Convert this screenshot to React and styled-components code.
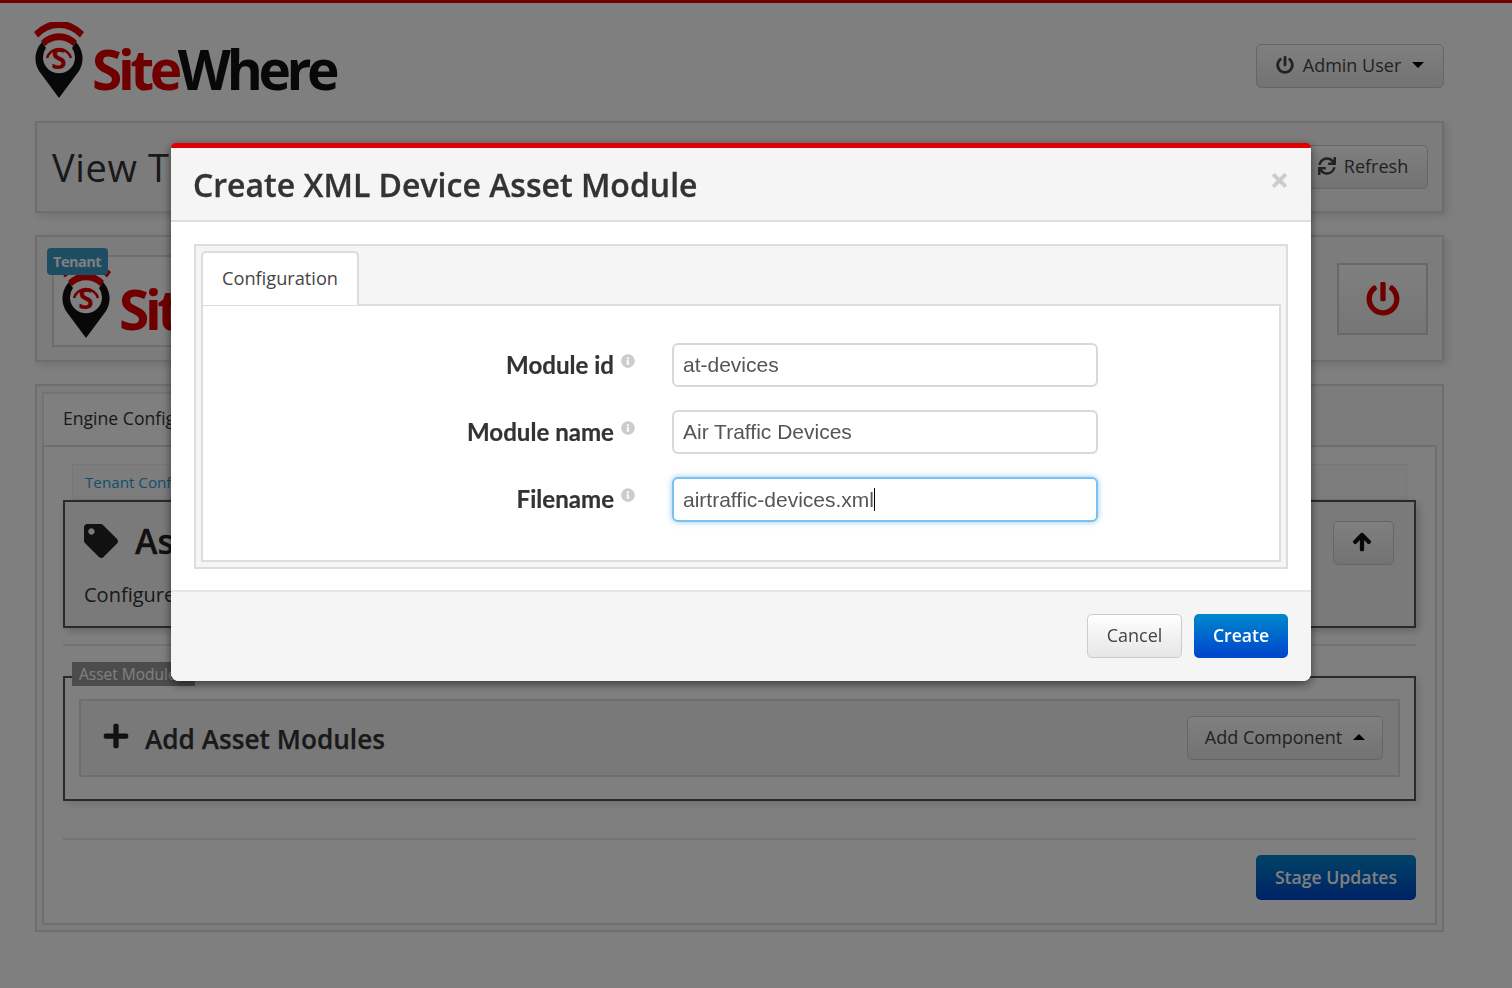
import React from 'react';
import styled, { createGlobalStyle } from 'styled-components';
import { FaPowerOff, FaSync, FaTag, FaPlus, FaArrowUp, FaInfoCircle, FaTimes } from 'react-icons/fa';

const GlobalStyle = createGlobalStyle`
  html, body {
    margin: 0;
    height: 988px;
    overflow: hidden;
    background: #fff;
    font-family: "Open Sans", sans-serif;
    color: #333;
  }
  * { box-sizing: border-box; }
`;

const Page = styled.div`
  border-top: 3px solid #e00000;
  padding: 0 68px 0 35px;
  height: 988px;
`;

const Header = styled.header`
  display: flex;
  justify-content: space-between;
  align-items: flex-start;
  height: 118px;
  padding-top: 19px;
`;

const LogoWrap = styled.div`
  display: flex;
  align-items: flex-start;
  margin-left: ${p => p.$offset || 0}px;
`;

const LogoText = styled.span`
  font-family: "Open Sans", sans-serif;
  font-weight: 700;
  font-size: 55px;
  line-height: 54px;
  letter-spacing: -4.4px;
  margin: 20px 0 0 8px;
  color: #111;
  white-space: nowrap;
  em {
    font-style: normal;
    color: #e00000;
  }
`;

const Button = styled.button`
  display: inline-flex;
  align-items: center;
  justify-content: center;
  gap: ${p => p.$gap || 9}px;
  height: 44px;
  width: ${p => p.$width}px;
  margin-top: ${p => p.$top || 0}px;
  padding: 0 0 2px;
  font-family: "Open Sans", sans-serif;
  font-size: 18px;
  color: #444;
  background: linear-gradient(#fff, #e6e6e6);
  border: 1.5px solid #ccc;
  border-radius: 5px;
  flex: none;
`;

const PrimaryButton = styled(Button)`
  height: ${p => p.$height || 44}px;
  font-size: 17.6px;
  color: #fff;
  font-weight: 600;
  border: none;
  background: linear-gradient(#0088cc, #0044cc);
`;

const Caret = styled.span`
  width: 0;
  height: 0;
  margin-left: 2px;
  border-left: 6px solid transparent;
  border-right: 6px solid transparent;
  border-top: ${p => (p.$up ? 'none' : '6px solid #000')};
  border-bottom: ${p => (p.$up ? '6px solid #000' : 'none')};
`;

const Panel = styled.section`
  position: relative;
  display: flex;
  align-items: center;
  justify-content: space-between;
  height: ${p => p.$height}px;
  margin-bottom: 22px;
  padding: 0 14px 0 15px;
  background: #f8f8f8;
  border: 2px solid #ddd;
  box-shadow: 3px 3px 8px rgba(0, 0, 0, 0.12);
`;

const PageTitle = styled.h1`
  margin: 0;
  font-size: 38px;
  font-weight: 400;
  letter-spacing: 0.6px;
  color: #333;
`;

const TenantBadge = styled.span`
  position: absolute;
  left: 10px;
  top: 11px;
  z-index: 1;
  width: 61px;
  height: 27px;
  padding: 3px 0 0 6px;
  font-size: 14.5px;
  font-weight: 700;
  letter-spacing: -0.5px;
  line-height: 21px;
  color: #fff;
  background: #3a9ac4;
  border-radius: 4px;
`;

const TenantLogoBox = styled.div`
  width: 440px;
  height: 92px;
  margin-top: 5px;
  padding: 5px 0 0 7px;
  background: #fff;
  border: 2px solid #ddd;
  overflow: hidden;
`;

const PowerButton = styled.button`
  display: flex;
  align-items: center;
  justify-content: center;
  width: 91px;
  height: 72px;
  margin-top: 1px;
  padding: 0;
  color: #e00000;
  font-size: 34px;
  background: linear-gradient(#fff, #ececec);
  border: 2px solid #d0d0d0;
`;

const MainPanel = styled.section`
  height: 548px;
  padding: 6px 5px 6px 5px;
  background: #f8f8f8;
  border: 2px solid #ddd;
`;

const MainTab = styled.div`
  width: 300px;
  height: 53px;
  padding: 12px 19px;
  font-size: 17.6px;
  color: #333;
  background: #fff;
  border: 2px solid #e6e6e6;
  border-bottom: none;
`;

const MainContent = styled.div`
  height: 480px;
  padding: 17px 19px 0 19px;
  background: #fff;
  border: 2px solid #ddd;
`;

const SubTab = styled.div`
  height: 36px;
  margin: 0 9px 0 9px;
  padding: 7px 12px;
  font-size: 15.2px;
  color: #1d9ed8;
  background: #fbfbfb;
  border: 1px solid #eee;
`;

const ConfigHeader = styled.div`
  position: relative;
  height: 128px;
  padding: 16px 19px;
  background: #f5f5f5;
  border: 2px solid #555;
  box-shadow: 3px 3px 8px rgba(0, 0, 0, 0.2);
`;

const ConfigTitle = styled.h2`
  display: flex;
  align-items: center;
  gap: 17px;
  margin: 0;
  font-size: 34px;
  font-weight: 600;
  -webkit-text-stroke: 0.3px;
  color: #222;
  svg { font-size: 34px; }
`;

const ConfigText = styled.p`
  margin: 17px 0 0;
  font-size: 20px;
  color: #333;
`;

const UpButton = styled(Button)`
  position: absolute;
  right: 20px;
  top: 19px;
  padding-right: 4px;
  color: #111;
  font-size: 20px;
  svg {
    stroke: currentColor;
    stroke-width: 30;
  }
`;

const Rule = styled.hr`
  margin: ${p => p.$top}px 0 ${p => p.$bottom}px;
  border: none;
  border-top: 2px solid #e6e6e6;
`;

const ModuleGroup = styled.div`
  position: relative;
  height: 125px;
  padding: 21px 14px 0 14px;
  background: #fff;
  border: 2px solid #555;
  box-shadow: 3px 3px 8px rgba(0, 0, 0, 0.12);
`;

const GroupLegend = styled.span`
  position: absolute;
  left: 7px;
  top: -16px;
  width: 123px;
  height: 24px;
  padding: 0 7px;
  font-size: 15.5px;
  line-height: 24px;
  color: #fff;
  background: #999;
`;

const AddBar = styled.div`
  display: flex;
  align-items: center;
  justify-content: space-between;
  height: 78px;
  padding: 0 15px 1px 21px;
  background: #f2f2f2;
  border: 2px solid #ddd;
`;

const AddTitle = styled.h3`
  display: flex;
  align-items: center;
  gap: 15px;
  margin: 3px 0 0;
  font-size: 26.2px;
  font-weight: 600;
  -webkit-text-stroke: 0.25px;
  color: #333;
  svg { font-size: 28px; color: #222; margin-top: -6px; }
`;

const Actions = styled.div`
  display: flex;
  justify-content: flex-end;
`;

const Overlay = styled.div`
  position: fixed;
  inset: 0;
  z-index: 10;
  background: rgba(0, 0, 0, 0.5);
`;

const Modal = styled.div`
  width: 1140px;
  height: 538px;
  margin: 143px 0 0 171px;
  border-top: 5px solid #e00000;
  border-radius: 5px 5px 8px 8px;
  background: #fff;
  box-shadow: 0 3px 10px rgba(0, 0, 0, 0.55);
  overflow: hidden;
`;

const ModalHeader = styled.div`
  display: flex;
  align-items: center;
  justify-content: space-between;
  height: 74px;
  padding: 0 21px 0 22px;
  background: #f5f5f5;
  border-bottom: 2px solid #ddd;
`;

const ModalTitle = styled.h2`
  margin: 0;
  font-size: 32px;
  font-weight: 600;
  -webkit-text-stroke: 0.3px;
  color: #333;
`;

const CloseIcon = styled.span`
  display: flex;
  margin-top: -8px;
  color: #ccc;
  font-size: 21px;
`;

const ModalBody = styled.div`
  height: 368px;
  padding: 22px 23px 0;
`;

const TabBox = styled.div`
  height: 325px;
  padding: 5px;
  background: #f5f5f5;
  border: 2px solid #ddd;
`;

const Tab = styled.div`
  position: relative;
  z-index: 1;
  width: 158px;
  height: 54px;
  padding: 13px 0 0 19px;
  font-size: 18.2px;
  color: #444;
  background: #fff;
  border: 2px solid #ddd;
  border-bottom: none;
  border-radius: 5px 5px 0 0;
`;

const TabContent = styled.div`
  display: flex;
  flex-direction: column;
  gap: 23px;
  height: 258px;
  margin-top: -1px;
  padding-top: 37px;
  background: #fff;
  border: 2px solid #ddd;
`;

const FormRow = styled.div`
  display: flex;
  align-items: center;
`;

const FieldLabel = styled.label`
  display: flex;
  justify-content: flex-end;
  align-items: center;
  gap: 7px;
  width: 469px;
  padding: 0 37px 2px 0;
  font-family: Lato, sans-serif;
  font-weight: 700;
  font-size: 24.1px;
  -webkit-text-stroke: 0.2px;
  color: #333;
  svg {
    font-size: 14px;
    color: #ccc;
    margin-top: -7px;
  }
`;

const FieldInput = styled.div`
  display: flex;
  align-items: center;
  width: 426px;
  height: ${p => (p.$focused ? 45 : 44)}px;
  padding: 0 9px;
  font-family: "Liberation Sans", Arial, sans-serif;
  font-size: 21px;
  color: #555;
  background: #fff;
  border: 2px solid ${p => (p.$focused ? '#7cc0f0' : '#d8d8d8')};
  border-radius: 6px;
  box-shadow: ${p => (p.$focused ? '0 0 6px rgba(102, 175, 233, 0.7)' : 'none')};
`;

const TextCaret = styled.span`
  width: 1px;
  height: 23px;
  background: #000;
`;

const ModalFooter = styled.div`
  display: flex;
  justify-content: flex-end;
  gap: 12px;
  height: 91px;
  padding: 22px 23px 0 0;
  background: #f5f5f5;
  border-top: 2px solid #e6e6e6;
`;

function Logo({ offset }) {
  return (
    <LogoWrap $offset={offset}>
      <svg width="50" height="76" viewBox="0 0 50 76">
        <path d="M0 10 A34 34 0 0 1 50 10 L46 15.5 A28 28 0 0 0 4 15.5 Z" fill="#e00000" />
        <path d="M7 19 A25 25 0 0 1 43 19 L39 24 A20 20 0 0 0 11 24 Z" fill="#e00000" />
        <path
          d="M8 20 A24 24 0 0 0 5 49 L25 76 L45 49 A24 24 0 0 0 42 20 L38 26 A16 16 0 1 1 12 26 Z"
          fill="#111"
        />
        <path d="M13 36 A12.5 12.5 0 0 1 37 36" fill="none" stroke="#e00000" strokeWidth="2.5" />
        <text x="25" y="47" textAnchor="middle" fontFamily="Open Sans, sans-serif" fontWeight="700" fontSize="28" fill="#e00000">
          S
        </text>
      </svg>
      <LogoText>
        <em>Site</em>Where
      </LogoText>
    </LogoWrap>
  );
}

export default function App() {
  return (
    <>
      <GlobalStyle />
      <Page>
        <Header>
          <Logo offset={-1} />
          <Button $width={188} $top={22}>
            <FaPowerOff size={18} />
            Admin User
            <Caret />
          </Button>
        </Header>

        <Panel $height={92}>
          <PageTitle>View Tenant</PageTitle>
          <Button $width={130} $gap={8}>
            <FaSync size={18} />
            Refresh
          </Button>
        </Panel>

        <Panel $height={127}>
          <TenantBadge>Tenant</TenantBadge>
          <TenantLogoBox>
            <Logo />
          </TenantLogoBox>
          <PowerButton>
            <FaPowerOff />
          </PowerButton>
        </Panel>

        <MainPanel>
          <MainTab>Engine Configuration</MainTab>
          <MainContent>
            <SubTab>Tenant Configuration</SubTab>
            <ConfigHeader>
              <ConfigTitle>
                <FaTag />
                Asset Modules
              </ConfigTitle>
              <ConfigText>Configure asset modules</ConfigText>
              <UpButton $width={61}>
                <FaArrowUp />
              </UpButton>
            </ConfigHeader>
            <Rule $top={16} $bottom={30} />
            <ModuleGroup>
              <GroupLegend>Asset Modules</GroupLegend>
              <AddBar>
                <AddTitle>
                  <FaPlus />
                  Add Asset Modules
                </AddTitle>
                <Button $width={196}>
                  Add Component
                  <Caret $up />
                </Button>
              </AddBar>
            </ModuleGroup>
            <Rule $top={37} $bottom={15} />
            <Actions>
              <PrimaryButton $width={160} $height={45}>
                Stage Updates
              </PrimaryButton>
            </Actions>
          </MainContent>
        </MainPanel>
      </Page>

      <Overlay>
        <Modal>
          <ModalHeader>
            <ModalTitle>Create XML Device Asset Module</ModalTitle>
            <CloseIcon>
              <FaTimes />
            </CloseIcon>
          </ModalHeader>
          <ModalBody>
            <TabBox>
              <Tab>Configuration</Tab>
              <TabContent>
                <FormRow>
                  <FieldLabel>
                    Module id <FaInfoCircle />
                  </FieldLabel>
                  <FieldInput>at-devices</FieldInput>
                </FormRow>
                <FormRow>
                  <FieldLabel>
                    Module name <FaInfoCircle />
                  </FieldLabel>
                  <FieldInput>Air Traffic Devices</FieldInput>
                </FormRow>
                <FormRow>
                  <FieldLabel>
                    Filename <FaInfoCircle />
                  </FieldLabel>
                  <FieldInput $focused>
                    airtraffic-devices.xml
                    <TextCaret />
                  </FieldInput>
                </FormRow>
              </TabContent>
            </TabBox>
          </ModalBody>
          <ModalFooter>
            <Button $width={95}>Cancel</Button>
            <PrimaryButton $width={94}>Create</PrimaryButton>
          </ModalFooter>
        </Modal>
      </Overlay>
    </>
  );
}
